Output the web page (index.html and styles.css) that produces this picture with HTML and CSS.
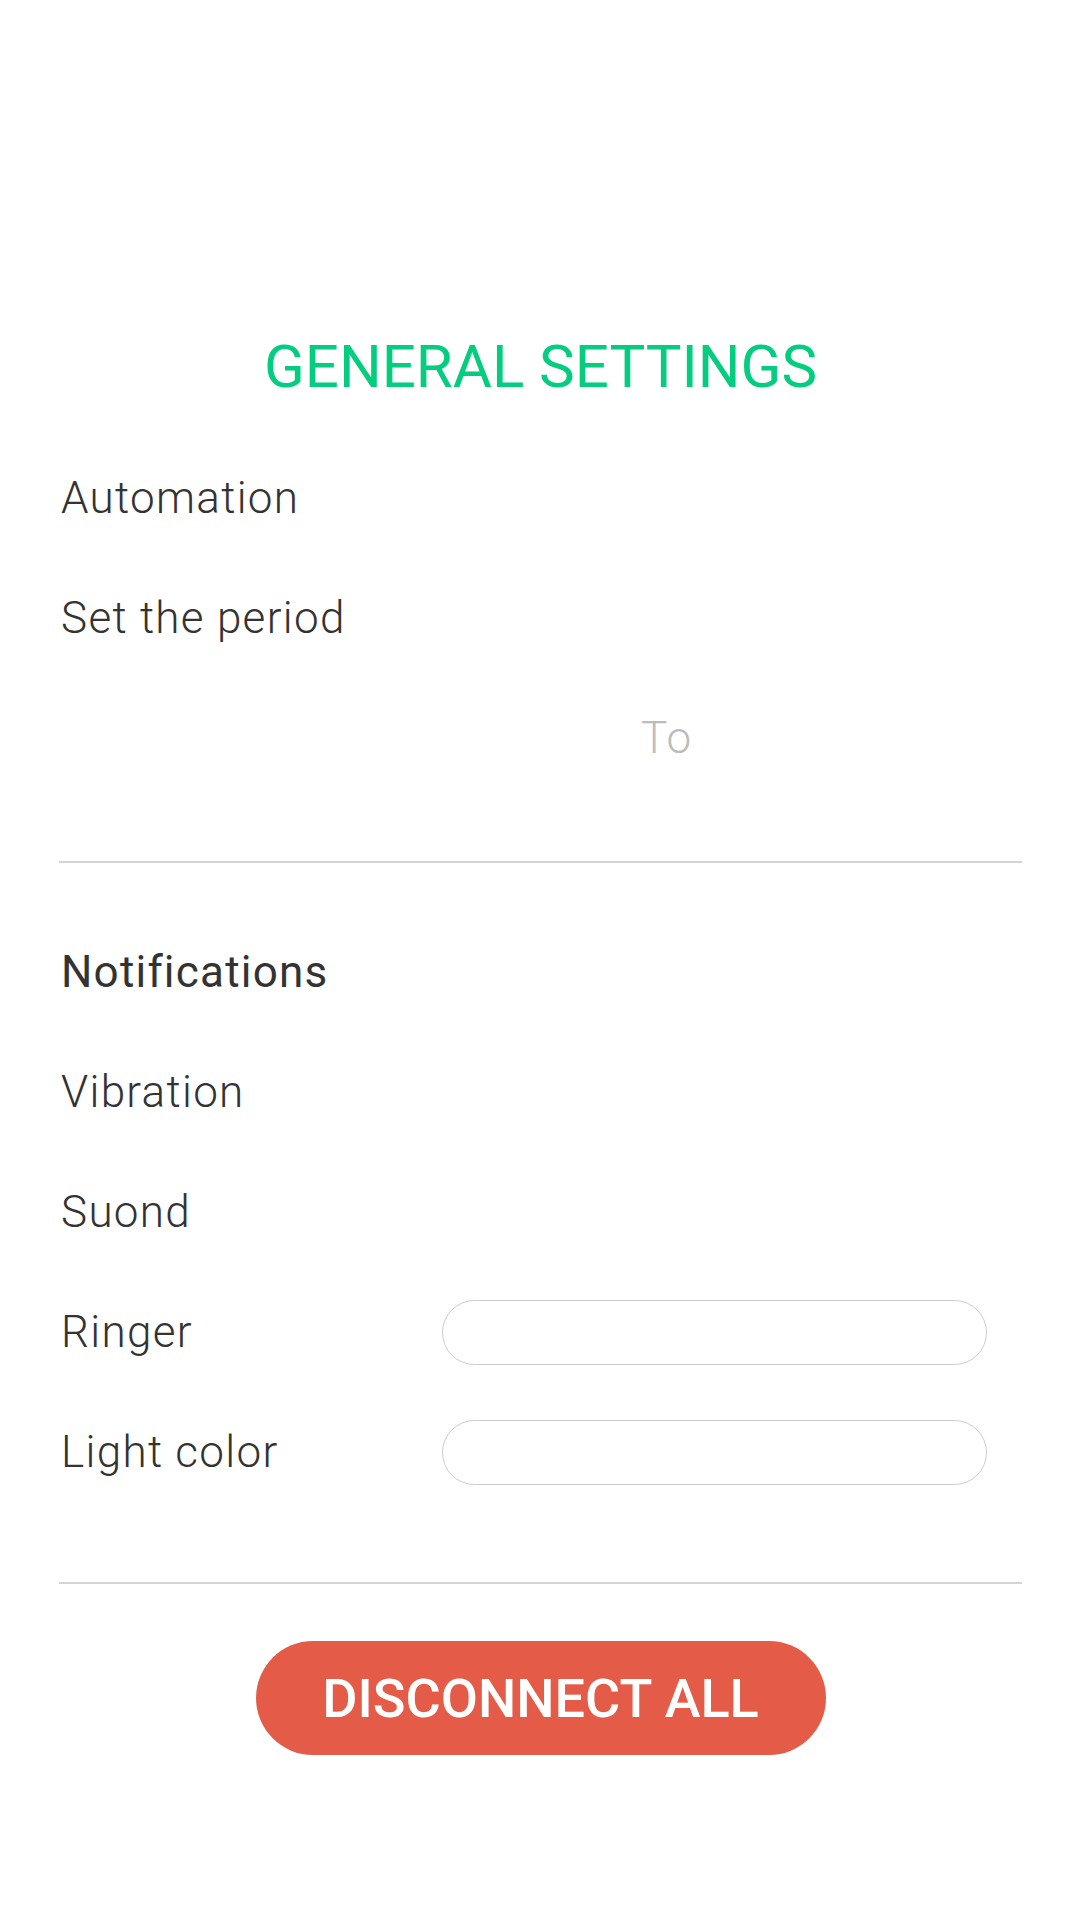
FILE: index.html
```html
<!DOCTYPE html>
<html>
<head>
<meta charset="utf-8">
<link rel="stylesheet" href="styles.css">
</head>
<body>
<div class="page">
  <h1 class="title">GENERAL SETTINGS</h1>
  <section class="group">
    <div class="row"><span class="label">Automation</span></div>
    <div class="row"><span class="label">Set the period</span></div>
    <div class="row period"><span class="from"></span><span class="to">To</span></div>
  </section>
  <hr class="divider first">
  <section class="group notif">
    <div class="row"><span class="label heading">Notifications</span></div>
    <div class="row"><span class="label">Vibration</span></div>
    <div class="row"><span class="label">Suond</span></div>
    <div class="row"><span class="label">Ringer</span><span class="field"></span></div>
    <div class="row"><span class="label">Light color</span><span class="field"></span></div>
  </section>
  <hr class="divider second">
  <div class="actions"><button class="btn-disconnect">DISCONNECT ALL</button></div>
</div>
</body>
</html>
```
FILE: styles.css
```css
html, body {
  margin: 0;
  padding: 0;
  background: #ffffff;
}
body {
  font-family: Roboto, "Noto Sans", sans-serif;
  color: #333333;
}
.page {
  width: 1081px;
  min-height: 1921px;
  padding-top: 332px;
  box-sizing: border-box;
}
.title {
  margin: 0;
  text-align: center;
  font-size: 60px;
  line-height: 70px;
  font-weight: 400;
  color: #05cd80;
}
.group {
  margin-top: 36px;
  padding-left: 61px;
  padding-right: 94px;
}
.row {
  display: grid;
  grid-template-columns: 381px 1fr;
  align-items: center;
  height: 120px;
}
.label {
  font-size: 44px;
  line-height: 120px;
  font-weight: 300;
  letter-spacing: 1.3px;
  color: #333333;
  white-space: nowrap;
}
.label.heading {
  font-weight: 400;
  letter-spacing: 1.2px;
}
.period {
  grid-template-columns: 580px 1fr;
}
.to {
  font-size: 44px;
  line-height: 120px;
  font-weight: 300;
  letter-spacing: 1.3px;
  color: #bcbcbc;
}
.field {
  display: block;
  height: 65px;
  box-sizing: border-box;
  border: 1.5px solid #cccccc;
  border-radius: 33px;
}
.divider {
  margin: 0 59px;
  border: 0;
  height: 2px;
  background: #d4d4d4;
}
.divider.first {
  margin-top: 63px;
}
.group.notif {
  margin-top: 49px;
}
.divider.second {
  margin-top: 70px;
}
.actions {
  display: flex;
  justify-content: center;
  margin-top: 57px;
}
.btn-disconnect {
  width: 570px;
  height: 114px;
  border: 0;
  border-radius: 57px;
  background: #e45b47;
  color: #ffffff;
  font-family: Roboto, "Noto Sans", sans-serif;
  font-size: 54px;
  font-weight: 500;
  padding: 0;
}
```
